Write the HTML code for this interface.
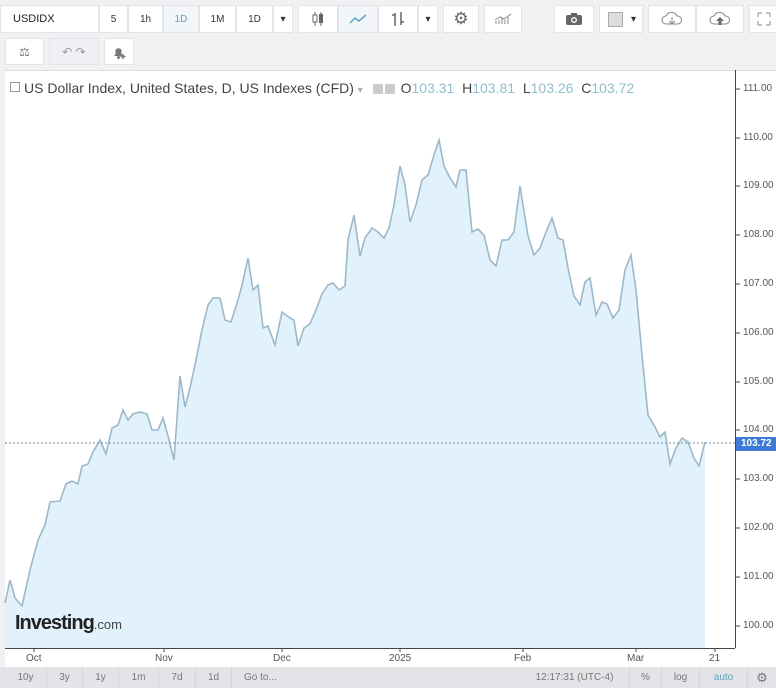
<!DOCTYPE html>
<html><head><meta charset="utf-8"><style>
*{box-sizing:border-box;margin:0;padding:0}
body{width:776px;height:688px;overflow:hidden;background:#f1f1f4;font-family:"Liberation Sans",sans-serif;position:relative}
.tb{position:absolute;top:5px;height:28px;background:#fff;border:1px solid #e3e3e8;font-size:10px;color:#333;display:flex;align-items:center;justify-content:center}
.ax{position:absolute;font-size:10px;color:#555}
.bb{position:absolute;top:667px;height:21px;font-size:10px;color:#777;display:flex;align-items:center;justify-content:center;border-right:1px solid #d6d6d6}
</style></head><body>
<div class="tb" style="left:0;width:99px;justify-content:flex-start;padding-left:12px;font-size:11px;color:#222">USDIDX</div>
<div class="tb" style="left:99px;width:29px">5</div>
<div class="tb" style="left:128px;width:35px">1h</div>
<div class="tb" style="left:163px;width:36px;color:#5aa5bd;background:#f3f6f8">1D</div>
<div class="tb" style="left:199px;width:37px">1M</div>
<div class="tb" style="left:236px;width:37px">1D</div>
<div class="tb" style="left:273px;width:20px">▾</div>
<div class="tb" style="left:298px;width:40px"><svg width="14" height="16"><path d="M4 1v14M10 1v14" stroke="#666"/><rect x="2" y="4" width="4" height="7" fill="#fff" stroke="#666"/><rect x="8" y="3" width="4" height="9" fill="#666"/></svg></div>
<div class="tb" style="left:338px;width:40px;background:#f3f6f8"><svg width="18" height="12"><path d="M1 10l5-5 4 3 7-6" stroke="#5aa5bd" fill="none" stroke-width="1.5"/></svg></div>
<div class="tb" style="left:378px;width:40px"><svg width="14" height="16"><path d="M4 2v13M4 4H1M10 1v13M10 11h3" stroke="#666" stroke-width="1.5"/></svg></div>
<div class="tb" style="left:418px;width:20px">▾</div>
<div class="tb" style="left:443px;width:36px"><span style="font-size:17px;color:#666">⚙</span></div>
<div class="tb" style="left:484px;width:38px"><svg width="18" height="12"><path d="M2 11v-3M5 11v-4M8 11v-6M11 11v-4M14 11v-7" stroke="#888"/><path d="M1 7l5-3 4 2 7-5" stroke="#888" fill="none"/></svg></div>
<div class="tb" style="left:554px;width:40px"><svg width="18" height="14"><rect x="1" y="3" width="16" height="10" rx="2" fill="#666"/><rect x="6" y="1" width="6" height="3" fill="#666"/><circle cx="9" cy="8" r="3" fill="#fff"/><circle cx="9" cy="8" r="1.6" fill="#666"/></svg></div>
<div class="tb" style="left:599px;width:44px;justify-content:flex-start;padding-left:8px"><span style="display:inline-block;width:15px;height:15px;background:#ddd;border:1px solid #aaa"></span><span style="margin-left:8px">▾</span></div>
<div class="tb" style="left:648px;width:48px"><svg width="22" height="16"><path d="M5 13a4 4 0 0 1 0-8 6 6 0 0 1 11 0 4 4 0 0 1 1 8z" stroke="#888" fill="none"/><path d="M11 6v7M8 10l3 3 3-3" stroke="#888" fill="none"/></svg></div>
<div class="tb" style="left:696px;width:48px"><svg width="22" height="16"><path d="M5 13a4 4 0 0 1 0-8 6 6 0 0 1 11 0 4 4 0 0 1 1 8z" stroke="#888" fill="none"/><path d="M11 6l-4 4h2.5v4h3v-4h2.5z" fill="#666"/></svg></div>
<div class="tb" style="left:749px;width:30px"><svg width="14" height="14"><path d="M1 1h4M1 1v4M13 1h-4M13 1v4M1 13h4M1 13v-4M13 13h-4M13 13v-4" stroke="#888"/></svg></div>
<div class="tb" style="left:5px;top:38px;width:39px;height:27px"><span style="font-size:12px;color:#777">⚖</span></div>
<div class="tb" style="left:49px;top:38px;width:50px;height:27px;background:#eef0f3;color:#999;font-size:12px">↶ ↷</div>
<div class="tb" style="left:104px;top:38px;width:30px;height:27px"><svg width="16" height="16"><path d="M3 12h9l-1.5-2V6a3.5 3.5 0 0 0-6 0v4z" fill="#777"/><circle cx="7.5" cy="13.5" r="1.5" fill="#777"/><path d="M12 10v5M9.5 12.5h5" stroke="#777" stroke-width="1.5"/></svg></div>
<div style="position:absolute;left:5px;top:70px;width:771px;height:597px;background:#fff;border-top:1px solid #ddd"></div>
<svg style="position:absolute;left:0;top:0" width="776" height="688">
<polygon fill="#e2f2fc" points="5,648 5,603 10,580 15,598 22,606 30,570 38,540 45,525 50,502 60,501 66,484 72,481 78,484 82,466 88,464 93,452 100,440 106,454 112,428 118,425 123,410 128,420 133,414 140,412 147,414 152,430 158,430 163,418 168,436 174,460 180,376 185,407 190,388 196,360 202,330 208,305 213,298 220,298 225,320 231,322 238,300 242,285 248,258 253,290 258,285 263,328 268,326 275,345 282,312 290,318 294,320 298,346 304,328 310,324 316,310 322,294 328,285 333,283 339,290 345,286 348,240 354,215 360,256 365,238 372,228 378,232 384,238 389,228 394,205 400,166 405,185 410,222 416,205 422,180 428,175 434,155 439,140 444,166 450,178 456,187 460,170 466,170 472,232 478,229 484,235 490,260 496,266 502,240 508,240 514,232 520,186 528,236 534,255 540,248 546,232 552,218 558,238 563,240 568,268 574,296 580,305 585,282 590,278 596,315 602,302 607,304 613,318 619,310 625,270 631,255 636,290 642,355 648,415 655,427 660,437 665,432 670,464 676,448 682,438 688,442 694,458 699,466 705,442 705,648"/>
<polyline fill="none" stroke="#9db8c9" stroke-width="1.6" points="5,603 10,580 15,598 22,606 30,570 38,540 45,525 50,502 60,501 66,484 72,481 78,484 82,466 88,464 93,452 100,440 106,454 112,428 118,425 123,410 128,420 133,414 140,412 147,414 152,430 158,430 163,418 168,436 174,460 180,376 185,407 190,388 196,360 202,330 208,305 213,298 220,298 225,320 231,322 238,300 242,285 248,258 253,290 258,285 263,328 268,326 275,345 282,312 290,318 294,320 298,346 304,328 310,324 316,310 322,294 328,285 333,283 339,290 345,286 348,240 354,215 360,256 365,238 372,228 378,232 384,238 389,228 394,205 400,166 405,185 410,222 416,205 422,180 428,175 434,155 439,140 444,166 450,178 456,187 460,170 466,170 472,232 478,229 484,235 490,260 496,266 502,240 508,240 514,232 520,186 528,236 534,255 540,248 546,232 552,218 558,238 563,240 568,268 574,296 580,305 585,282 590,278 596,315 602,302 607,304 613,318 619,310 625,270 631,255 636,290 642,355 648,415 655,427 660,437 665,432 670,464 676,448 682,438 688,442 694,458 699,466 705,442"/>
<line x1="5" y1="443" x2="735" y2="443" stroke="#7a8a99" stroke-dasharray="2,2"/>
<line x1="735.5" y1="70" x2="735.5" y2="648" stroke="#444"/>
<line x1="5" y1="648.5" x2="735" y2="648.5" stroke="#444"/>
<g stroke="#444">
<line x1="736" y1="89" x2="740" y2="89"/><line x1="736" y1="138" x2="740" y2="138"/><line x1="736" y1="186" x2="740" y2="186"/><line x1="736" y1="235" x2="740" y2="235"/><line x1="736" y1="284" x2="740" y2="284"/><line x1="736" y1="333" x2="740" y2="333"/><line x1="736" y1="382" x2="740" y2="382"/><line x1="736" y1="430" x2="740" y2="430"/><line x1="736" y1="479" x2="740" y2="479"/><line x1="736" y1="528" x2="740" y2="528"/><line x1="736" y1="577" x2="740" y2="577"/><line x1="736" y1="626" x2="740" y2="626"/>
<line x1="34" y1="648" x2="34" y2="652"/><line x1="164" y1="648" x2="164" y2="652"/><line x1="282" y1="648" x2="282" y2="652"/><line x1="400" y1="648" x2="400" y2="652"/><line x1="523" y1="648" x2="523" y2="652"/><line x1="636" y1="648" x2="636" y2="652"/><line x1="715" y1="648" x2="715" y2="652"/>
</g>
<rect x="736" y="437" width="40" height="14" fill="#3f7ad6"/>
</svg>
<div class="ax" style="left:743px;top:83px">111.00</div>
<div class="ax" style="left:743px;top:132px">110.00</div>
<div class="ax" style="left:743px;top:180px">109.00</div>
<div class="ax" style="left:743px;top:229px">108.00</div>
<div class="ax" style="left:743px;top:278px">107.00</div>
<div class="ax" style="left:743px;top:327px">106.00</div>
<div class="ax" style="left:743px;top:376px">105.00</div>
<div class="ax" style="left:743px;top:424px">104.00</div>
<div class="ax" style="left:741px;top:438px;color:#fff;font-weight:bold">103.72</div>
<div class="ax" style="left:743px;top:473px">103.00</div>
<div class="ax" style="left:743px;top:522px">102.00</div>
<div class="ax" style="left:743px;top:571px">101.00</div>
<div class="ax" style="left:743px;top:620px">100.00</div>
<div class="ax" style="left:26px;top:653px">Oct</div>
<div class="ax" style="left:155px;top:653px">Nov</div>
<div class="ax" style="left:273px;top:653px">Dec</div>
<div class="ax" style="left:389px;top:653px">2025</div>
<div class="ax" style="left:514px;top:653px">Feb</div>
<div class="ax" style="left:627px;top:653px">Mar</div>
<div class="ax" style="left:709px;top:653px">21</div>
<div style="position:absolute;left:10px;top:80px;font-size:14px;color:#444;white-space:nowrap"><span style="display:inline-block;width:10px;height:10px;border:1px solid #999;vertical-align:1px;margin-right:4px"></span>US Dollar Index, United States, D, US Indexes (CFD) <span style="color:#aaa;font-size:10px">▾</span>
<span style="display:inline-block;width:10px;height:10px;background:#ccc;margin-left:6px;vertical-align:-1px"></span><span style="display:inline-block;width:10px;height:10px;background:#ccc;margin-left:2px;vertical-align:-1px"></span>
<span style="font-size:14px;margin-left:2px">O<span style="color:#8fbfcc">103.31</span>&nbsp; H<span style="color:#8fbfcc">103.81</span>&nbsp; L<span style="color:#8fbfcc">103.26</span>&nbsp; C<span style="color:#8fbfcc">103.72</span></span></div>
<div style="position:absolute;left:15px;top:612px;font-size:20px;font-weight:bold;color:#222;letter-spacing:-1px">Investing<span style="font-size:13px;font-weight:normal;color:#444;letter-spacing:0">.com</span></div>
<div style="position:absolute;left:0;top:667px;width:776px;height:21px;background:#e4e4e8"></div>
<div class="bb" style="left:5px;width:42px">10y</div>
<div class="bb" style="left:47px;width:36px">3y</div>
<div class="bb" style="left:83px;width:36px">1y</div>
<div class="bb" style="left:119px;width:40px">1m</div>
<div class="bb" style="left:159px;width:37px">7d</div>
<div class="bb" style="left:196px;width:36px">1d</div>
<div class="bb" style="left:232px;width:60px;justify-content:flex-start;padding-left:12px;border:none">Go to...</div>
<div class="bb" style="left:520px;width:110px">12:17:31 (UTC-4)</div>
<div class="bb" style="left:630px;width:32px">%</div>
<div class="bb" style="left:662px;width:38px">log</div>
<div class="bb" style="left:700px;width:48px;color:#5aa5bd">auto</div>
<div class="bb" style="left:748px;width:28px;border:none;font-size:13px">⚙</div>
</body></html>
